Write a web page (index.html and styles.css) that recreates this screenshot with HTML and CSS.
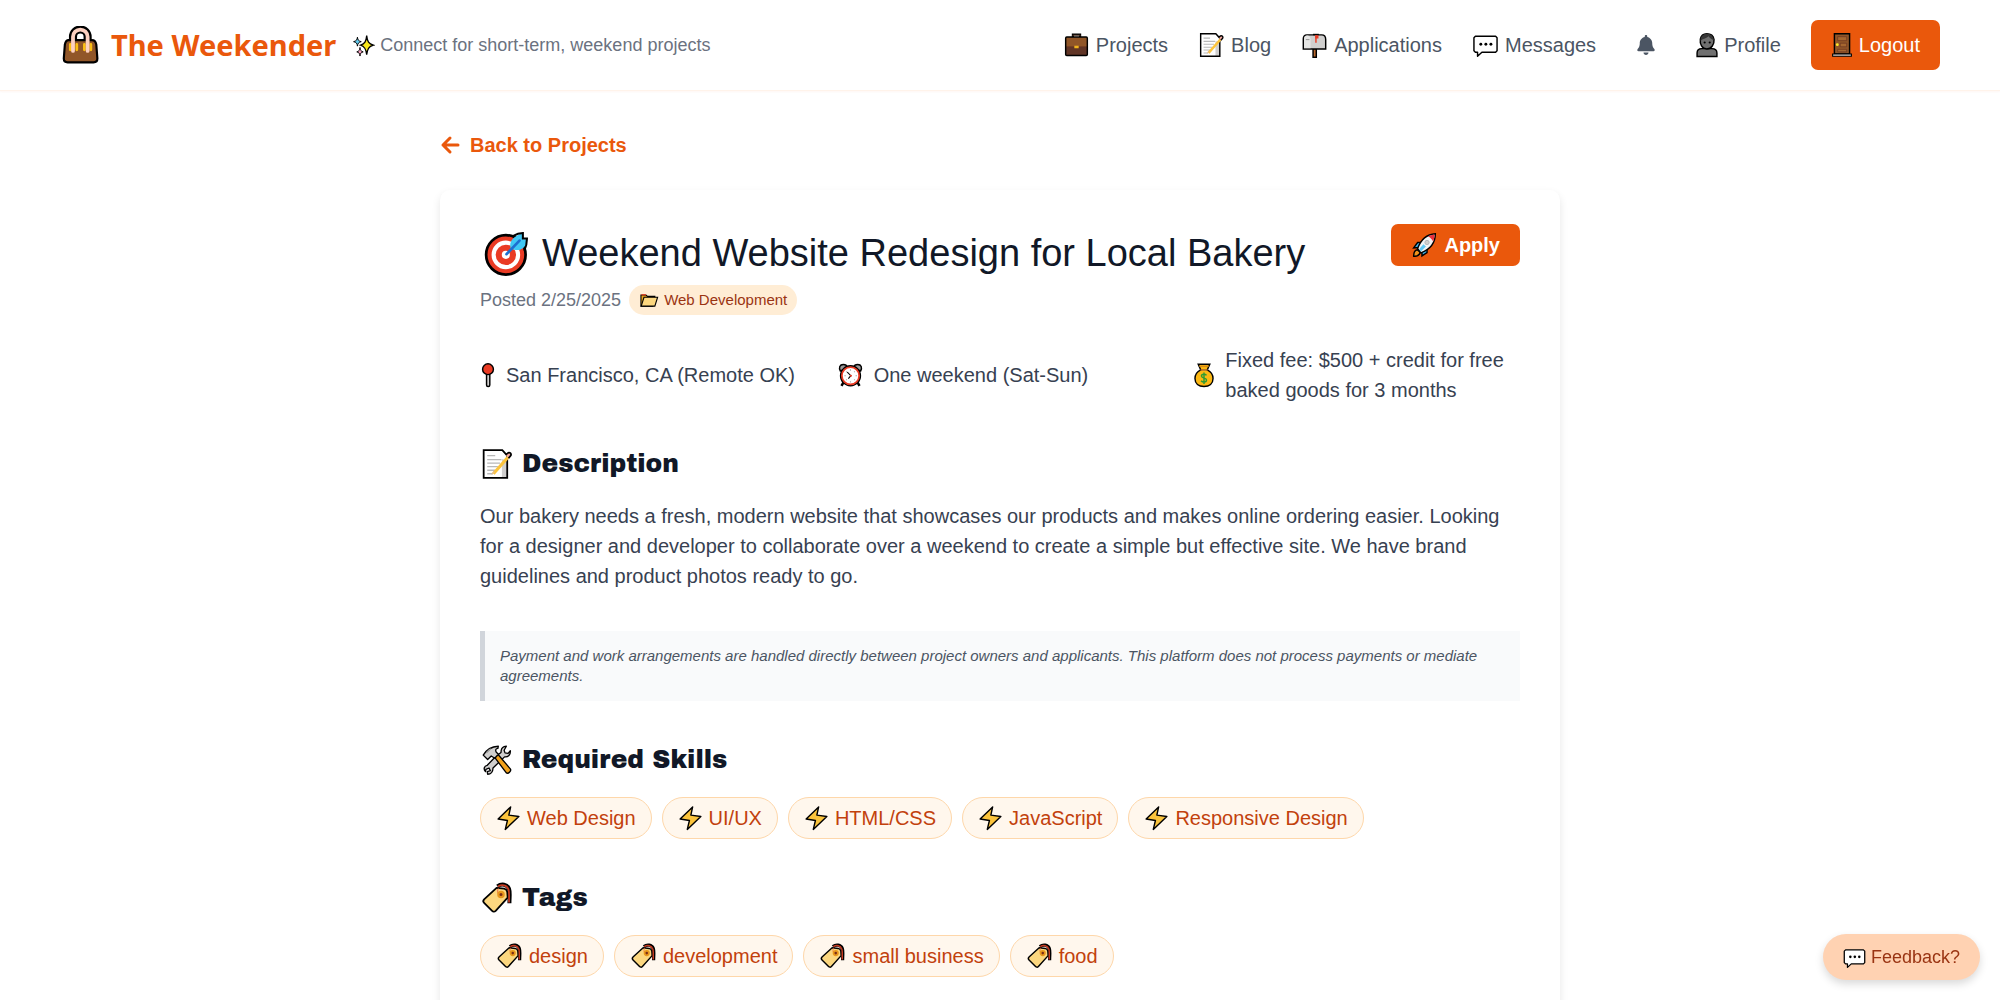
FILE: index.html
```html
<!DOCTYPE html>
<html lang="en">
<head>
    <meta charset="UTF-8">
    <meta name="viewport" content="width=device-width, initial-scale=1.0">
    <title>Weekend Website Redesign for Local Bakery - The Weekender</title>
    <link rel="stylesheet" href="styles.css">
</head>
<body>
    <!-- icon set -->
    <svg class="sprite" aria-hidden="true">
        <symbol id="handbag" viewBox="0 0 72 72">
            <path d="M24 30V20a13 13 0 0 1 27 0v10" fill="none" stroke="#000" stroke-width="15"/>
            <path d="M16 26h43c5 0 7 3 8 8l2 26c0 5-3 7-7 7H14c-4 0-7-2-7-7l2-26c1-5 3-8 7-8z" fill="#915628" stroke="#000" stroke-width="4"/>
            <path d="M19 34v10M31 34v10M45 34v10M57 34v10" stroke="#fcbf13" stroke-width="5" stroke-linecap="round"/>
            <path d="M24 46V20a13 13 0 0 1 27 0v26" fill="none" stroke="#fcd0c0" stroke-width="7" stroke-linecap="round"/>
        </symbol>
        <symbol id="sparkles" viewBox="0 0 72 72">
            <path d="M46 5c2 19 6 26 21 30-15 4-19 12-21 30-2-18-6-26-19-30 13-4 17-11 19-30z" fill="#f8e71c" stroke="#000" stroke-width="4"/>
            <path d="M17 10c1 9 4 12 12 14-8 2-11 5-12 14-1-9-4-12-12-14 8-2 11-5 12-14z" fill="#61c9ed" stroke="#000" stroke-width="3"/>
            <path d="M25 42c1 9 3 12 10 14-7 2-9 4-10 13-1-9-3-11-10-13 7-2 9-5 10-14z" fill="#f5a0c0" stroke="#000" stroke-width="3"/>
        </symbol>
        <symbol id="briefcase" viewBox="0 0 72 72">
            <path d="M26 14V7h20v7" fill="none" stroke="#000" stroke-width="6"/>
            <path d="M26 12V9h20v3" fill="none" stroke="#6a462f" stroke-width="2"/>
            <rect x="6" y="14" width="60" height="51" rx="3" fill="#613526"/>
            <path d="M6 17a3 3 0 0 1 3-3h54a3 3 0 0 1 3 3v24H6z" fill="#915628"/>
            <path d="M7 41h58" stroke="#6a3522" stroke-width="2"/>
            <rect x="6" y="14" width="60" height="51" rx="3" fill="none" stroke="#000" stroke-width="4"/>
            <rect x="30" y="38" width="12" height="7" fill="#f1b31c"/>
        </symbol>
        <symbol id="memo" viewBox="0 0 72 72">
            <path d="M6 5h43l12 13v50H6z" fill="#fff"/>
            <path d="M47 25v42h12V28z" fill="#d0cfce"/>
            <path d="M6 5h42l11 12v50H6z" fill="none" stroke="#000" stroke-width="4"/>
            <path d="M14 17h18M14 26h32M14 34h29M14 42h24M14 50h18M14 58h13" stroke="#b8b8b8" stroke-width="3"/>
            <path d="M28 58l35-40" stroke="#fcc43c" stroke-width="7"/>
            <path d="M56 15l5-4c4-2 8 2 6 6l-5 6" fill="#f4aaa0" stroke="#000" stroke-width="4"/>
            <path d="M23 60l9-5-4-4z" fill="#e8bd80"/>
        </symbol>
        <symbol id="mailbox" viewBox="0 0 72 72">
            <rect x="32" y="46" width="9" height="24" fill="#b8672e" stroke="#000" stroke-width="4"/>
            <path d="M5 47V19C5 11 10 8 15 8h41c7 0 11 5 11 13v26z" fill="#d0cfce" stroke="#000" stroke-width="4"/>
            <path d="M25 45V20c0-6-4-10-9-10S7 14 7 20v25z" fill="#e6e6e5"/>
            <path d="M12 21h10" stroke="#9b9b9a" stroke-width="3"/>
            <path d="M32 7h16" stroke="#000" stroke-width="4"/>
            <path d="M40 30V9" stroke="#ea3b24" stroke-width="4"/>
            <path d="M38 9h9v9h-9z" fill="#ea3b24"/>
        </symbol>
        <symbol id="bubble" viewBox="0 0 72 72">
            <path d="M8 12h56l4 4v36l-4 4H26L14 67V56H8l-4-4V16z" fill="#fff" stroke="#000" stroke-width="4" stroke-linejoin="round"/>
            <circle cx="23" cy="34" r="4"/>
            <circle cx="37" cy="34" r="4"/>
            <circle cx="51" cy="34" r="4"/>
        </symbol>
        <symbol id="bell" viewBox="0 0 448 512">
            <path d="M224 0c-18 0-32 14-32 32v19C119 66 64 131 64 208v19c0 47-17 92-49 128l-7 8c-9 9-11 23-6 34s17 19 30 19h384c13 0 24-7 29-19s3-25-5-34l-8-8c-31-36-48-81-48-128v-19c0-77-55-142-128-157V32c0-18-14-32-32-32zm45 493c12-12 19-28 19-45H160c0 17 7 33 19 45s28 19 45 19 33-7 45-19z" fill="#4b5563"/>
        </symbol>
        <symbol id="person" viewBox="6 0 61 72">
            <path d="M9 68V58c0-9 6-12 13-12h28c8 0 14 3 14 12v10z" fill="#707070" stroke="#000" stroke-width="4"/>
            <path d="M18 20C20 9 27 5 36 5s18 5 20 16c1 13-7 26-20 26S16 34 18 20z" fill="#707070" stroke="#000" stroke-width="4"/>
            <path d="M18 24C19 9 29 5 38 5c9 1 16 7 18 17-8-1-12-5-15-10-6 6-14 6-23 12z" fill="#353535"/>
            <circle cx="30" cy="29" r="3"/>
            <circle cx="44" cy="29" r="3"/>
        </symbol>
        <symbol id="door" viewBox="7 0 58 72">
            <path d="M15 5h42v56H15z" fill="#915628" stroke="#000" stroke-width="4"/>
            <path d="M24 13h25v11H24zM31 31h18v10H31zM24 48h25v7H24z" fill="#a5662f" stroke="#6a3522" stroke-width="2"/>
            <path d="M10 61h52v6H10z" fill="#d0cfce" stroke="#000" stroke-width="3"/>
            <circle cx="23" cy="35" r="4" fill="#fcea2b"/>
        </symbol>
        <symbol id="target" viewBox="-3 1 72 72">
            <circle cx="35" cy="39" r="29" fill="#ea3b24" stroke="#000" stroke-width="4"/>
            <circle cx="35" cy="39" r="18" fill="#ea3b24" stroke="#fff" stroke-width="6"/>
            <circle cx="35" cy="39" r="6" fill="#fff"/>
            <path d="M42 30c-3-12 5-18 18-23v9h7c-2 12-10 20-25 14z" fill="#40c8f4"/>
            <path d="M46 11c5-3 9-4 14-4v8h6c0 7-1 12-4 18" fill="none" stroke="#000" stroke-width="3"/>
            <path d="M36 38l19-20" stroke="#1e6fd0" stroke-width="4" stroke-linecap="round"/>
        </symbol>
        <symbol id="folder" viewBox="0 0 72 72">
            <path d="M7 18h18l6 5h26v8L50 58H7z" fill="#e8a31c" stroke="#000" stroke-width="4"/>
            <path d="M8 58l10-32h49L57 58z" fill="#fcd77f" stroke="#000" stroke-width="4"/>
            <path d="M9 17h16" stroke="#ea3b24" stroke-width="4"/>
        </symbol>
        <symbol id="rocket" viewBox="0 0 72 72">
            <path d="M27 29H17L6 44l14-1M43 46v11L29 66V53" fill="#40b8f0" stroke="#000" stroke-width="4"/>
            <path d="M16 49c-7 1-10 9-10 18 9 1 16-3 18-11z" fill="#f1931c" stroke="#000" stroke-width="4"/>
            <path d="M17 46C24 26 38 7 66 5c0 27-14 43-40 53z" fill="#f2f4f5" stroke="#000" stroke-width="4"/>
            <path d="M46 12c6-3 11-4 18-5 0 8-2 14-4 19-4-6-8-10-14-14z" fill="#ea2f3b"/>
            <path d="M21 48l12-14 7 6-14 14z" fill="#61c9f5"/>
            <circle cx="43" cy="29" r="6" fill="#d0cfce" stroke="#a5abb0" stroke-width="2"/>
        </symbol>
        <symbol id="pin" viewBox="15 0 42 72">
            <rect x="32" y="32" width="9" height="36" rx="4" fill="#d0cfce" stroke="#000" stroke-width="4"/>
            <ellipse cx="36" cy="20" rx="15" ry="15" fill="#ea3b24" stroke="#000" stroke-width="4"/>
        </symbol>
        <symbol id="clock" viewBox="0 0 72 72">
            <path d="M17 56l-6 10M55 56l6 10" stroke="#000" stroke-width="7"/>
            <path d="M8 25C3 16 6 7 16 7c7 0 10 3 11 8zM64 25c5-9 2-18-8-18-7 0-10 3-11 8z" fill="#9b9b9a" stroke="#000" stroke-width="4"/>
            <circle cx="36" cy="38" r="26" fill="#fff" stroke="#000" stroke-width="7"/>
            <circle cx="36" cy="38" r="24" fill="#fff" stroke="#ea3b24" stroke-width="5"/>
            <path d="M36 20v4M36 53v4M19 38h4M50 38h4M24 26l2 2M48 26l-2 2M24 50l2-2M48 50l-2-2" stroke="#aaa" stroke-width="3"/>
            <path d="M27 28l10 10-7 8" fill="none" stroke="#000" stroke-width="3"/>
            <circle cx="37" cy="38" r="3" fill="#ea3b24"/>
        </symbol>
        <symbol id="money" viewBox="7 0 58 72">
            <path d="M27 22L20 6h32l-7 16c10 5 16 14 16 24 0 14-10 22-25 22S11 60 11 46c0-10 6-19 16-24z" fill="#fcb813" stroke="#000" stroke-width="4"/>
            <path d="M23 12h26" stroke="#d98b14" stroke-width="4"/>
            <path d="M26 22h20" stroke="#a5662f" stroke-width="4"/>
            <path d="M43 37c-3-4-14-5-14 2s14 4 14 11-11 7-15 2M36 29v32" fill="none" stroke="#2d9b34" stroke-width="4"/>
        </symbol>
        <symbol id="tools" viewBox="0 0 72 72">
            <path d="M10 62c-5-5-3-13 4-14l19-20 12-9c0-6 2-11 7-13l5-1-5 9 2 6 7 1 5-6c1 9-5 15-13 14L27 54c0 8-5 14-12 14l-1-6 7-2-3-6-7 3z" fill="#d0cfce" stroke="#000" stroke-width="3" stroke-linejoin="round"/>
            <path d="M30 29l7-7 29 34c3 4-4 12-9 9z" fill="#f1a11c" stroke="#000" stroke-width="3" stroke-linejoin="round"/>
            <path d="M5 25c7-12 16-19 34-20l-1 5c-5 0-6 4-4 8l5 5-8 9-8-5-4 4-4 4z" fill="#d0cfce" stroke="#000" stroke-width="3" stroke-linejoin="round"/>
            <path d="M12 20c3-4 6-7 10-9" stroke="#9b9b9a" stroke-width="3"/>
        </symbol>
        <symbol id="bolt" viewBox="1 0 70 72">
            <path d="M42 5L7 39l26 4-6 25 38-36-28-4z" fill="#fcc43c" stroke="#000" stroke-width="4" stroke-linejoin="round"/>
        </symbol>
        <symbol id="tag" viewBox="0 0 72 72">
            <path d="M37 10C46 3 59 5 63 15c3 8 1 17 1 33" fill="none" stroke="#000" stroke-width="9"/>
            <path d="M7 39L35 13l17 2c4 1 6 3 7 7l1 13-27 30c-3 3-6 2-8 0L7 47c-3-3-2-6 0-8z" fill="#fcd77f" stroke="#000" stroke-width="4" stroke-linejoin="round"/>
            <path d="M38 10c9-5 20-4 24 7 2 7 1 16 1 29" fill="none" stroke="#c63a20" stroke-width="4"/>
            <path d="M39 14c-4 10 0 16 7 16" fill="none" stroke="#ea5a3b" stroke-width="2"/>
            <circle cx="45" cy="28" r="6" fill="#7b2d17" stroke="#e8971c" stroke-width="5"/>
        </symbol>
        <symbol id="arrow" viewBox="0 0 20 20">
            <path d="M10 3L3 10l7 7M3 10h15" fill="none" stroke="#ea580c" stroke-width="3" stroke-linecap="round" stroke-linejoin="round"/>
        </symbol>
    </svg>

    <header class="header">
        <div class="brand">
            <a href="#" class="logo"><svg class="icon-logo"><use href="#handbag"/></svg>The Weekender</a>
            <span class="tagline"><svg class="icon-sm"><use href="#sparkles"/></svg>Connect for short-term, weekend projects</span>
        </div>
        <nav class="nav">
            <a href="#"><svg class="icon"><use href="#briefcase"/></svg>Projects</a>
            <a href="#"><svg class="icon"><use href="#memo"/></svg>Blog</a>
            <a href="#"><svg class="icon"><use href="#mailbox"/></svg>Applications</a>
            <a href="#"><svg class="icon"><use href="#bubble"/></svg>Messages</a>
            <button type="button" class="bell" aria-label="Notifications"><svg><use href="#bell"/></svg></button>
            <a href="#"><svg class="icon icon-narrow"><use href="#person"/></svg>Profile</a>
            <button type="button" class="btn logout"><svg class="icon icon-narrow"><use href="#door"/></svg>Logout</button>
        </nav>
    </header>

    <main class="main">
        <a href="#" class="back"><svg><use href="#arrow"/></svg>Back to Projects</a>

        <article class="card">
            <div class="card-top">
                <div>
                    <h1><svg class="icon-xl"><use href="#target"/></svg>Weekend Website Redesign for Local Bakery</h1>
                    <div class="meta">
                        <span>Posted 2/25/2025</span>
                        <span class="category"><svg class="icon-xs"><use href="#folder"/></svg>Web Development</span>
                    </div>
                </div>
                <button type="button" class="btn apply"><svg class="icon"><use href="#rocket"/></svg>Apply</button>
            </div>

            <div class="info">
                <div><svg class="icon icon-pin"><use href="#pin"/></svg><span>San Francisco, CA (Remote OK)</span></div>
                <div><svg class="icon"><use href="#clock"/></svg><span>One weekend (Sat-Sun)</span></div>
                <div><svg class="icon icon-narrow"><use href="#money"/></svg><span>Fixed fee: $500 + credit for free baked goods for 3 months</span></div>
            </div>

            <section>
                <h2><svg class="icon-lg"><use href="#memo"/></svg>Description</h2>
                <p>Our bakery needs a fresh, modern website that showcases our products and makes online ordering easier. Looking for a designer and developer to collaborate over a weekend to create a simple but effective site. We have brand guidelines and product photos ready to go.</p>
            </section>

            <div class="notice">Payment and work arrangements are handled directly between project owners and applicants. This platform does not process payments or mediate agreements.</div>

            <section>
                <h2><svg class="icon-lg"><use href="#tools"/></svg>Required Skills</h2>
                <ul class="chips">
                    <li><svg class="icon icon-bolt"><use href="#bolt"/></svg>Web Design</li>
                    <li><svg class="icon icon-bolt"><use href="#bolt"/></svg>UI/UX</li>
                    <li><svg class="icon icon-bolt"><use href="#bolt"/></svg>HTML/CSS</li>
                    <li><svg class="icon icon-bolt"><use href="#bolt"/></svg>JavaScript</li>
                    <li><svg class="icon icon-bolt"><use href="#bolt"/></svg>Responsive Design</li>
                </ul>
            </section>

            <section>
                <h2><svg class="icon-lg"><use href="#tag"/></svg>Tags</h2>
                <ul class="chips">
                    <li><svg class="icon"><use href="#tag"/></svg>design</li>
                    <li><svg class="icon"><use href="#tag"/></svg>development</li>
                    <li><svg class="icon"><use href="#tag"/></svg>small business</li>
                    <li><svg class="icon"><use href="#tag"/></svg>food</li>
                </ul>
            </section>
        </article>
    </main>

    <button type="button" class="feedback"><svg class="icon-sm"><use href="#bubble"/></svg>Feedback?</button>
</body>
</html>
```
FILE: styles.css
```css
* {
    box-sizing: border-box;
}
body {
    margin: 0;
    background-color: #fff;
    color: #374151;
    font-family: "Liberation Sans", Arial, sans-serif;
    font-size: 20px;
    line-height: 30px;
}
h1, h2, p, ul {
    margin: 0;
    padding: 0;
}
a {
    text-decoration: none;
}
button {
    border: none;
    font-family: inherit;
    font-size: 20px;
    line-height: 30px;
    cursor: pointer;
}
svg {
    flex-shrink: 0;
}
.sprite {
    display: none;
}

/* icon sizes */
.icon {
    width: 27px;
    height: 26px;
}
.icon-bolt {
    width: 25px;
}
.icon-narrow {
    width: 22px;
}
.icon-pin {
    width: 16px;
}
.icon-xs {
    width: 20px;
    height: 20px;
}
.icon-sm {
    width: 23px;
    height: 23px;
}
.icon-lg {
    width: 34px;
    height: 32px;
}
.icon-logo {
    width: 39px;
    height: 39px;
}
.icon-xl {
    width: 49px;
    height: 49px;
}

/* header */
.header {
    display: flex;
    justify-content: space-between;
    align-items: center;
    padding: 20px 60px;
    border-bottom: 1px solid #fff3ea;
    box-shadow: 0 1px 2px rgba(234, 88, 12, 0.05);
}
.brand {
    display: flex;
    align-items: center;
    gap: 16px;
}
.logo {
    display: flex;
    align-items: center;
    gap: 12px;
    color: #ea580c;
    font-family: "Noto Sans", sans-serif;
    font-size: 29px;
    font-weight: bold;
}
.tagline {
    display: flex;
    align-items: center;
    gap: 5px;
    color: #6b7280;
    font-size: 18px;
}
.nav {
    display: flex;
    align-items: center;
    gap: 30px;
}
.nav a {
    display: flex;
    align-items: center;
    gap: 6px;
    color: #4b5563;
}
.bell {
    width: 40px;
    height: 40px;
    padding: 10px;
    background: none;
}
.bell svg {
    display: block;
    width: 20px;
    height: 20px;
}
.btn {
    display: flex;
    align-items: center;
    gap: 6px;
    background-color: #ea580c;
    color: #fff;
    border-radius: 7px;
}
.logout {
    padding: 10px 20px;
}

/* project */
.main {
    max-width: 1120px;
    margin: 0 auto;
    padding: 39px 0 60px;
}
.back {
    display: flex;
    align-items: center;
    gap: 10px;
    width: fit-content;
    color: #ea580c;
    font-weight: bold;
}
.back svg {
    width: 20px;
    height: 20px;
}
.card {
    margin-top: 30px;
    padding: 34px 40px 40px;
    background-color: #fff;
    border-radius: 10px;
    box-shadow: 0 4px 8px rgba(0, 0, 0, 0.1);
}
.card-top {
    display: flex;
    justify-content: space-between;
    align-items: flex-start;
}
h1 {
    display: flex;
    align-items: center;
    gap: 13px;
    color: #111827;
    font-size: 38px;
    font-weight: normal;
    line-height: 58px;
}
.meta {
    display: flex;
    align-items: center;
    gap: 8px;
    margin-top: 3px;
    color: #6b7280;
    font-size: 18px;
}
.category {
    display: flex;
    align-items: center;
    gap: 5px;
    padding: 0 10px;
    background-color: #ffedd5;
    color: #9a3412;
    border-radius: 15px;
    font-size: 15px;
}
.apply {
    padding: 6px 20px;
    font-weight: bold;
}
.info {
    display: grid;
    grid-template-columns: repeat(3, 1fr);
    gap: 30px;
    margin-top: 30px;
}
.info div {
    display: flex;
    align-items: center;
    gap: 10px;
}
section {
    margin-top: 40px;
}
h2 {
    display: flex;
    align-items: center;
    gap: 8px;
    margin-bottom: 18px;
    color: #111827;
    font-family: "Archivo Black", "Arial Black", Inter, sans-serif;
    font-size: 25px;
    font-weight: normal;
    line-height: 38px;
}
.notice {
    margin-top: 40px;
    padding: 15px;
    border-left: 5px solid #d1d5db;
    background-color: #f9fafb;
    color: #4b5563;
    font-size: 15px;
    font-style: italic;
    line-height: 20px;
}
.chips {
    display: flex;
    flex-wrap: wrap;
    gap: 10px;
    list-style: none;
}
.chips li {
    display: flex;
    align-items: center;
    gap: 6px;
    padding: 5px 15px;
    border: 1px solid #fed7aa;
    border-radius: 21px;
    background-color: #fff7ed;
    color: #c2410c;
}

.feedback {
    position: fixed;
    right: 20px;
    bottom: 20px;
    display: flex;
    align-items: center;
    gap: 5px;
    padding: 8px 20px;
    border-radius: 24px;
    background-color: #ffd2b2;
    color: #9a3412;
    font-size: 18px;
    box-shadow: 0 4px 8px rgba(0, 0, 0, 0.15);
}
```
